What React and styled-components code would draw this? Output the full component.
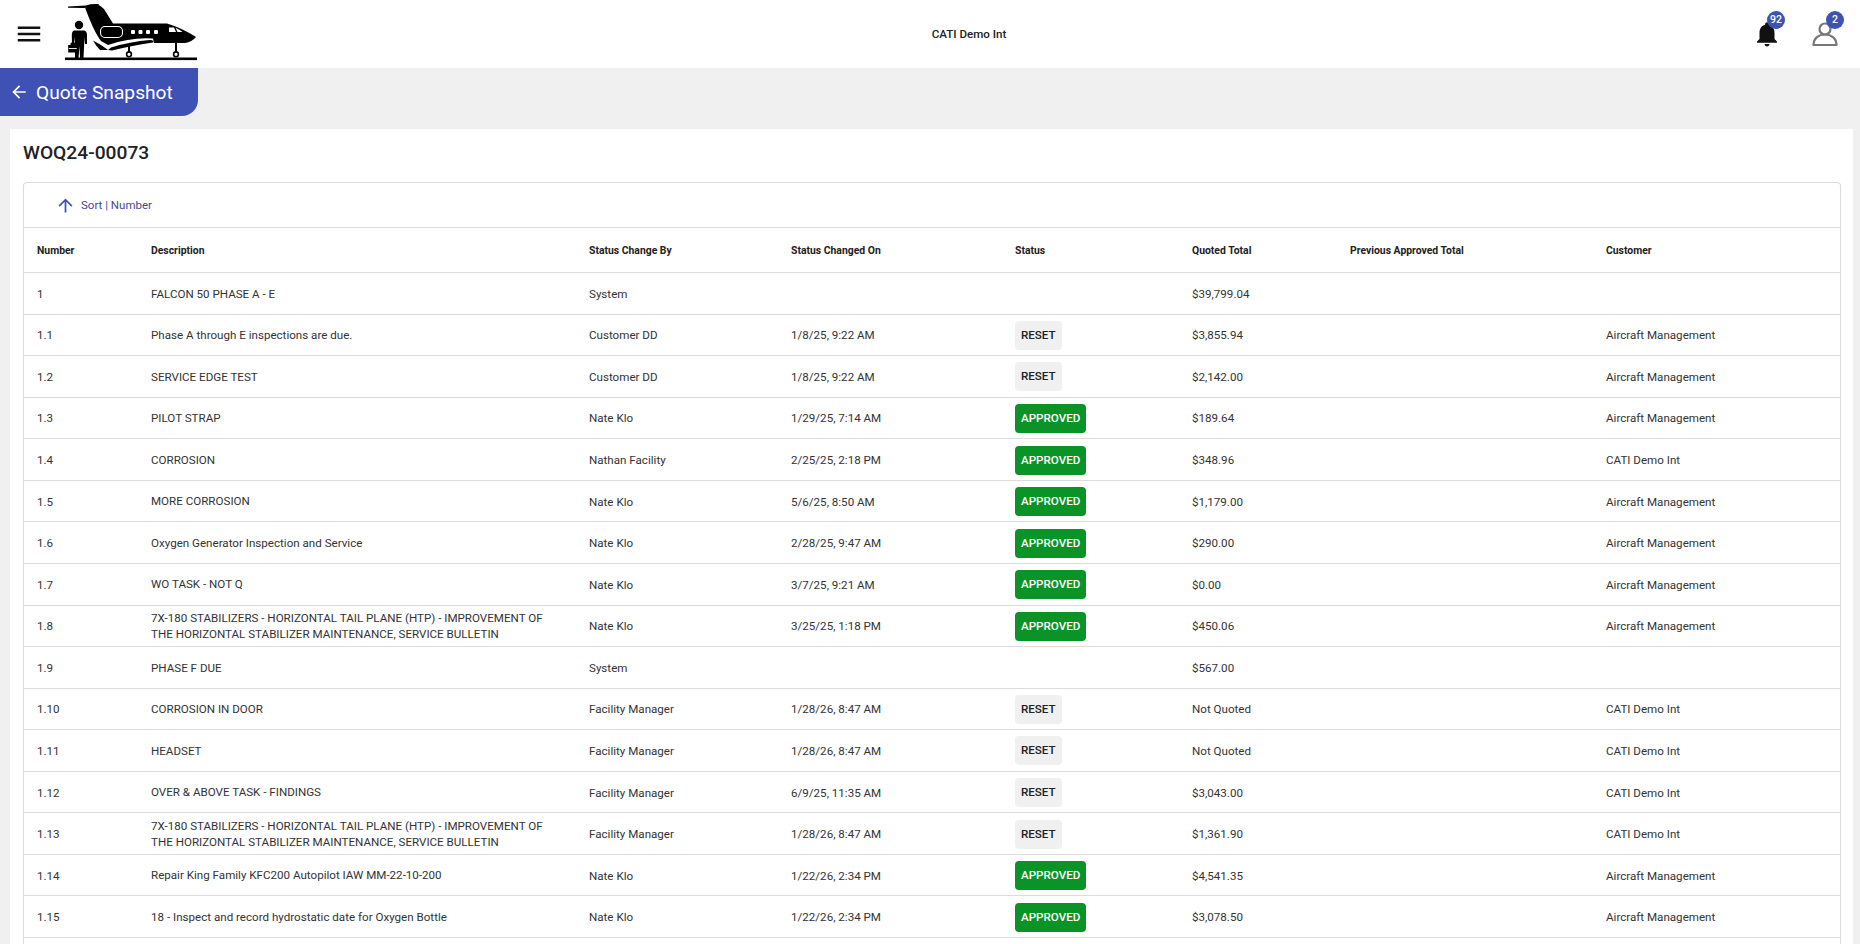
import styled, { createGlobalStyle } from 'styled-components';

const GlobalStyle = createGlobalStyle`
  html, body, #root {
    margin: 0;
    height: 100%;
  }
  body {
    font-family: Roboto, "Liberation Sans", sans-serif;
    background: #f0f0f0;
    color: #333;
  }
`;

const COLUMNS = '114px 438px 202px 224px 177px 158px 256px 1fr';

const Page = styled.div`
  height: 944px;
  display: flex;
  flex-direction: column;
  overflow: hidden;
`;

const Header = styled.header`
  flex: none;
  height: 68px;
  display: flex;
  align-items: center;
  padding: 0 20px 0 14px;
  background: #fff;
`;

const MenuButton = styled.svg`
  width: 30px;
  height: 30px;
  margin-right: 16px;
  fill: #111;
`;

const Logo = styled.svg`
  width: 140px;
  height: 66px;
  align-self: flex-start;
`;

const OrgName = styled.div`
  flex: 1;
  padding-right: 14px;
  text-align: center;
  font-size: 11.6px;
  font-weight: 500;
  color: #222;
`;

const Actions = styled.div`
  display: flex;
  align-items: center;
  gap: 28px;
`;

const IconButton = styled.div`
  position: relative;
  width: 30px;
  height: 30px;
`;

const Icon = styled.svg`
  display: block;
  width: 30px;
  height: 30px;
  fill: ${(p) => p.$fill || 'none'};
`;

const Count = styled.span`
  position: absolute;
  top: -8px;
  right: ${(p) => p.$right}px;
  width: 18px;
  height: 18px;
  border-radius: 50%;
  background: #3f51b5;
  color: #fff;
  font-size: 10.5px;
  font-weight: 500;
  line-height: 18px;
  text-align: center;
`;

const Tab = styled.div`
  flex: none;
  width: 198px;
  height: 48px;
  display: flex;
  align-items: center;
  gap: 7px;
  padding-left: 9px;
  box-sizing: border-box;
  background: #3f51b5;
  color: #fff;
  border-bottom-right-radius: 16px;
  font-size: 19.2px;
`;

const TabIcon = styled.svg`
  width: 20px;
  height: 20px;
  fill: #fff;
`;

const Card = styled.main`
  flex: 1;
  min-height: 0;
  display: flex;
  flex-direction: column;
  margin: 13px 7px 0 10px;
  padding: 0 12px 0 13px;
  background: #fff;
`;

const Title = styled.h1`
  flex: none;
  height: 53px;
  margin: 0;
  font-size: 19.2px;
  font-weight: 500;
  line-height: 48px;
  color: #222;
`;

const Frame = styled.section`
  flex: 1;
  border: 1px solid #dcdcdc;
  border-bottom: 0;
  border-radius: 4px 4px 0 0;
`;

const SortBar = styled.div`
  height: 45px;
  box-sizing: border-box;
  display: flex;
  align-items: center;
  gap: 5px;
  padding-left: 31px;
  border-bottom: 1px solid #dcdcdc;
  color: #3f4a9b;
  font-size: 11.5px;
`;

const SortIcon = styled.svg`
  width: 21px;
  height: 21px;
  fill: #3f51b5;
`;

const Row = styled.div`
  display: grid;
  grid-template-columns: ${COLUMNS};
  align-items: center;
  box-sizing: border-box;
  height: ${(p) => (p.$head ? '45px' : '41.57px')};
  padding: ${(p) => (p.$head ? '0' : '1px')} 0 0 13px;
  border-bottom: 1px solid #dcdcdc;
  font-size: ${(p) => (p.$head ? '10.4px' : '11.6px')};
  font-weight: ${(p) => (p.$head ? 700 : 400)};
  color: ${(p) => (p.$head ? '#222' : '#333')};
`;

const Description = styled.div`
  max-width: 400px;
  line-height: 16.5px;
`;

const Status = styled.span`
  display: inline-block;
  height: 29px;
  padding: 0 6px;
  border-radius: 4px;
  background: ${(p) => (p.$approved ? '#0a9428' : '#f0f0f0')};
  color: ${(p) => (p.$approved ? '#fff' : '#222')};
  font-size: 11.6px;
  font-weight: 500;
  line-height: 29px;
`;

const rows = [
  ['1', 'FALCON 50 PHASE A - E', 'System', '', '', '$39,799.04', ''],
  ['1.1', 'Phase A through E inspections are due.', 'Customer DD', '1/8/25, 9:22 AM', 'RESET', '$3,855.94', 'Aircraft Management'],
  ['1.2', 'SERVICE EDGE TEST', 'Customer DD', '1/8/25, 9:22 AM', 'RESET', '$2,142.00', 'Aircraft Management'],
  ['1.3', 'PILOT STRAP', 'Nate Klo', '1/29/25, 7:14 AM', 'APPROVED', '$189.64', 'Aircraft Management'],
  ['1.4', 'CORROSION', 'Nathan Facility', '2/25/25, 2:18 PM', 'APPROVED', '$348.96', 'CATI Demo Int'],
  ['1.5', 'MORE CORROSION', 'Nate Klo', '5/6/25, 8:50 AM', 'APPROVED', '$1,179.00', 'Aircraft Management'],
  ['1.6', 'Oxygen Generator Inspection and Service', 'Nate Klo', '2/28/25, 9:47 AM', 'APPROVED', '$290.00', 'Aircraft Management'],
  ['1.7', 'WO TASK - NOT Q', 'Nate Klo', '3/7/25, 9:21 AM', 'APPROVED', '$0.00', 'Aircraft Management'],
  ['1.8', '7X-180 STABILIZERS - HORIZONTAL TAIL PLANE (HTP) - IMPROVEMENT OF THE HORIZONTAL STABILIZER MAINTENANCE, SERVICE BULLETIN', 'Nate Klo', '3/25/25, 1:18 PM', 'APPROVED', '$450.06', 'Aircraft Management'],
  ['1.9', 'PHASE F DUE', 'System', '', '', '$567.00', ''],
  ['1.10', 'CORROSION IN DOOR', 'Facility Manager', '1/28/26, 8:47 AM', 'RESET', 'Not Quoted', 'CATI Demo Int'],
  ['1.11', 'HEADSET', 'Facility Manager', '1/28/26, 8:47 AM', 'RESET', 'Not Quoted', 'CATI Demo Int'],
  ['1.12', 'OVER & ABOVE TASK - FINDINGS', 'Facility Manager', '6/9/25, 11:35 AM', 'RESET', '$3,043.00', 'CATI Demo Int'],
  ['1.13', '7X-180 STABILIZERS - HORIZONTAL TAIL PLANE (HTP) - IMPROVEMENT OF THE HORIZONTAL STABILIZER MAINTENANCE, SERVICE BULLETIN', 'Facility Manager', '1/28/26, 8:47 AM', 'RESET', '$1,361.90', 'CATI Demo Int'],
  ['1.14', 'Repair King Family KFC200 Autopilot IAW MM-22-10-200', 'Nate Klo', '1/22/26, 2:34 PM', 'APPROVED', '$4,541.35', 'Aircraft Management'],
  ['1.15', '18 - Inspect and record hydrostatic date for Oxygen Bottle', 'Nate Klo', '1/22/26, 2:34 PM', 'APPROVED', '$3,078.50', 'Aircraft Management'],
];

// viewBox uses page pixels so the shapes can be read straight off the screenshot
const PlaneLogo = () => (
  <Logo viewBox="60 0 140 66">
    <rect x="65" y="57.5" width="132" height="2.6" />
    {/* tail */}
    <path d="M68 6.4 L86 5.4 Q91 3.6 98 4 L100 5.6 L84 8 L68 7.8 Z" />
    {/* fuselage */}
    <path d="M85 7.5 L97 5 Q101 5.5 104 9 L113 23.5 L167 23.5 Q182 28 196 37 Q192 42 185 43 L154 43 L153 38.6 Q132 37 108 45 L101 41 Q94 32 85 7.5 Z" />
    {/* engine */}
    <rect x="100.5" y="26.5" width="22" height="11" rx="4.5" fill="#000" stroke="#fff" strokeWidth="1.1" />
    {/* cabin windows */}
    <rect x="131" y="30" width="4" height="4" rx="1" fill="#fff" />
    <rect x="138.5" y="30" width="4" height="4" rx="1" fill="#fff" />
    <rect x="146" y="30" width="4" height="4" rx="1" fill="#fff" />
    <rect x="154" y="30" width="4" height="4" rx="1" fill="#fff" />
    <path d="M169 27.5 L174 27.5 L176 32 L169 32 Z M175.5 27.8 Q179 29 182.5 32 L177.5 32 Z" fill="#fff" />
    {/* wing and stabilizer */}
    <path d="M93 40.5 L101 45 L108 50 L100 50 Q96 46 93 40.5 Z" />
    <path d="M108 50 L111 47.5 Q130 41.5 150 40 Q155 40.5 153 42.5 Q130 46 112 50.5 Z" />
    {/* gear */}
    <rect x="128" y="44" width="2" height="8" />
    <rect x="175" y="43" width="2" height="9" />
    <circle cx="129" cy="54.3" r="2.4" fill="#fff" stroke="#000" strokeWidth="1.6" />
    <circle cx="176" cy="54.3" r="2.4" fill="#fff" stroke="#000" strokeWidth="1.6" />
    {/* passenger */}
    <circle cx="79" cy="25" r="4.2" />
    <path d="M74 30.5 H84 Q87 31 87 35 L87 44 L85 44 L84.5 37 L83.5 58 L80 58 L79.5 46 L78.5 58 L75 58 L75 37 L74 44 L72 44 L71.8 35 Q72 31 74 30.5 Z" />
    <path d="M70.5 45 V43.5 Q70.5 42.5 72 42.5 H74 Q75.5 42.5 75.5 43.5 V45 H77.5 V52.5 H68.2 V45 Z" />
    <rect x="68.8" y="48" width="8" height="0.9" fill="#fff" />
  </Logo>
);

export default function App() {
  return (
    <Page>
      <GlobalStyle />
      <Header>
        <MenuButton viewBox="0 0 24 24">
          <path d="M3 18h18v-2H3v2zm0-5h18v-2H3v2zm0-7v2h18V6H3z" />
        </MenuButton>
        <PlaneLogo />
        <OrgName>CATI Demo Int</OrgName>
        <Actions>
          <IconButton>
            <Icon viewBox="0 0 24 24" $fill="#111">
              <path d="M12 22c1.1 0 2-.9 2-2h-4c0 1.1.89 2 2 2zm6-6v-5c0-3.07-1.64-5.64-4.5-6.32V4c0-.83-.67-1.5-1.5-1.5s-1.5.67-1.5 1.5v.68C7.63 5.36 6 7.92 6 11v5l-2 2v1h16v-1l-2-2z" />
            </Icon>
            <Count $right={-3}>92</Count>
          </IconButton>
          <IconButton>
            <Icon viewBox="0 0 30 30">
              <circle cx="15" cy="10" r="5.5" stroke="#777" strokeWidth="2.2" />
              <path d="M3.5 26 C3.5 19 9 15.5 15 15.5 C21 15.5 26.5 19 26.5 26 Z" stroke="#777" strokeWidth="2.2" strokeLinejoin="round" />
            </Icon>
            <Count $right={-4}>2</Count>
          </IconButton>
        </Actions>
      </Header>

      <Tab>
        <TabIcon viewBox="0 0 24 24">
          <path d="M20 11H7.83l5.59-5.59L12 4l-8 8 8 8 1.41-1.41L7.83 13H20v-2z" />
        </TabIcon>
        Quote Snapshot
      </Tab>

      <Card>
        <Title>WOQ24-00073</Title>
        <Frame>
          <SortBar>
            <SortIcon viewBox="0 0 24 24">
              <path d="M4 12l1.41 1.41L11 7.83V20h2V7.83l5.58 5.59L20 12l-8-8-8 8z" />
            </SortIcon>
            Sort | Number
          </SortBar>
          <Row $head>
            <div>Number</div>
            <div>Description</div>
            <div>Status Change By</div>
            <div>Status Changed On</div>
            <div>Status</div>
            <div>Quoted Total</div>
            <div>Previous Approved Total</div>
            <div>Customer</div>
          </Row>
          {rows.map(([num, desc, by, on, status, total, customer]) => (
            <Row key={num}>
              <div>{num}</div>
              <Description>{desc}</Description>
              <div>{by}</div>
              <div>{on}</div>
              <div>{status && <Status $approved={status === 'APPROVED'}>{status}</Status>}</div>
              <div>{total}</div>
              <div />
              <div>{customer}</div>
            </Row>
          ))}
        </Frame>
      </Card>
    </Page>
  );
}
